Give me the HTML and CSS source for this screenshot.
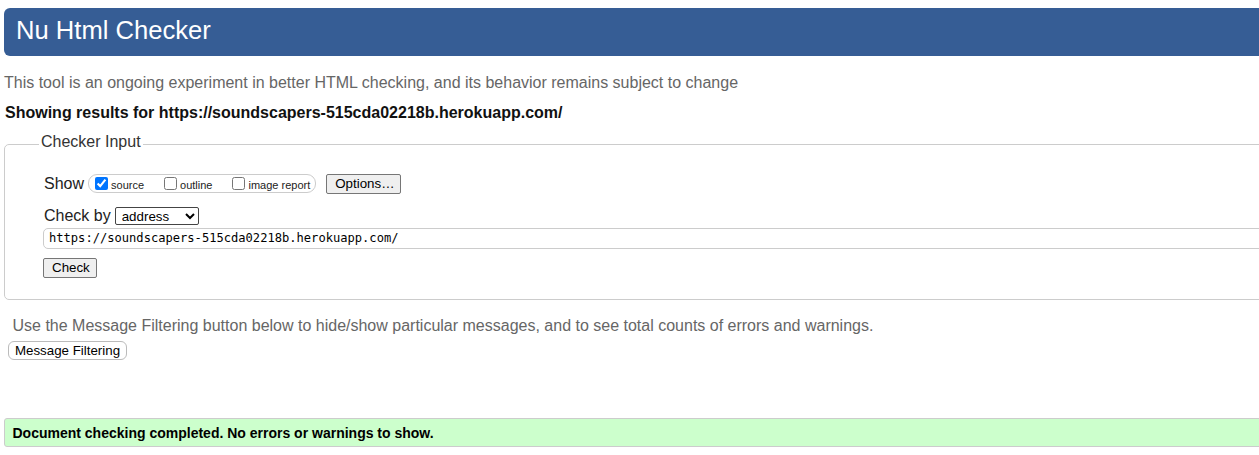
FILE: index.html
```html
<!DOCTYPE html>
<html lang="en">
<head>
<meta charset="utf-8">
<title>Nu Html Checker</title>
<link rel="stylesheet" href="styles.css">
</head>
<body>
<h1 class="title">Nu Html Checker</h1>
<p class="tagline">This tool is an ongoing experiment in better HTML checking, and its behavior remains subject to change</p>
<p class="results-for">Showing results for https://soundscapers-515cda02218b.herokuapp.com/</p>
<fieldset class="checker">
  <legend class="checker-legend">Checker Input</legend>
  <div class="row show-row">
    <span class="row-label">Show</span>
    <span class="show-group">
      <label class="opt"><input type="checkbox" checked><span>source</span></label>
      <label class="opt"><input type="checkbox"><span>outline</span></label>
      <label class="opt last"><input type="checkbox"><span>image report</span></label>
    </span>
    <button class="btn options-btn" type="button">Options…</button>
  </div>
  <div class="row checkby-row">
    <span class="row-label">Check by</span>
    <select class="checkby-select"><option>address</option></select>
  </div>
  <div class="url-row">
    <input class="url-input" type="text" value="https://soundscapers-515cda02218b.herokuapp.com/">
  </div>
  <div class="submit-row">
    <button class="btn check-btn" type="button">Check</button>
  </div>
</fieldset>
<p class="filter-note">Use the Message Filtering button below to hide/show particular messages, and to see total counts of errors and warnings.</p>
<button class="filter-btn" type="button">Message Filtering</button>
<p class="success">Document checking completed. No errors or warnings to show.</p>
</body>
</html>
```
FILE: styles.css
```css
html {
  overflow: hidden;
  background: #fff;
}
body {
  margin: 8px 0 0 4px;
  width: 1300px;
  font-family: "Liberation Sans", Arial, sans-serif;
  font-size: 16px;
  color: #222;
}
.title {
  margin: 0;
  height: 48px;
  box-sizing: border-box;
  padding: 0 0 4px 12px;
  line-height: 44px;
  font-size: 25.6px;
  font-weight: normal;
  color: #fff;
  background: #365d95;
  border-radius: 6px 0 0 6px;
}
.tagline {
  margin: 17.5px 0 0 0;
  line-height: 18px;
  color: #666;
}
.results-for {
  margin: 12.5px 0 0 1px;
  line-height: 18px;
  font-weight: bold;
  color: #111;
}
.checker {
  margin: 11px 0 0 0;
  padding: 18.5px 0 21px 39px;
  border: 1px solid #ccc;
  border-radius: 5px 0 0 5px;
  min-width: 0;
}
.checker-legend {
  margin-left: -5px;
  padding: 0 2px 4px;
  line-height: 18px;
  color: #333;
}
.row {
  display: flex;
  align-items: center;
  height: 20px;
}
.row-label {
  line-height: 18px;
  margin-right: 4px;
}
.show-group {
  display: flex;
  align-items: center;
  height: 19px;
  box-sizing: border-box;
  border: 1px solid #ccc;
  border-radius: 9px;
  padding: 0 5px 0 2px;
  font-size: 11px;
}
.opt {
  display: flex;
  align-items: center;
  margin-right: 16px;
}
.opt.last {
  margin-right: 0;
}
.opt input {
  margin: 0 3px 0 4px;
  width: 13px;
  height: 13px;
}
.opt span {
  position: relative;
  top: 1px;
}
.btn {
  font-family: "Liberation Sans", Arial, sans-serif;
  font-size: 13.33px;
  height: 20px;
  padding: 0 8px;
  border: 1px solid #767676;
  border-radius: 2px;
  background: #efefef;
  color: #000;
}
.options-btn {
  margin-left: 10px;
  width: 75px;
}
.checkby-row {
  margin-top: 12px;
}
.checkby-select {
  width: 84px;
  height: 18px;
  font-family: "Liberation Sans", Arial, sans-serif;
  font-size: 13.33px;
  border: 1px solid #444;
  border-radius: 2px;
  background: #fff;
  color: #000;
  padding: 0 0 0 2px;
}
.url-row {
  margin-top: 2px;
}
.url-input {
  display: block;
  box-sizing: border-box;
  width: 1300px;
  height: 21px;
  margin-left: -1px;
  padding: 0 5px;
  border: 1px solid #ccc;
  border-radius: 5px;
  font-family: "DejaVu Sans Mono", "Liberation Mono", monospace;
  font-size: 12.1px;
  color: #000;
}
.submit-row {
  margin-top: 9px;
  height: 20px;
}
.check-btn {
  margin-left: -1px;
  width: 54px;
}
.filter-note {
  margin: 17px 0 0 8.5px;
  line-height: 18px;
  color: #666;
}
.filter-btn {
  display: block;
  margin: 6.5px 0 0 4px;
  height: 19px;
  width: 119px;
  padding: 0;
  font-family: "Liberation Sans", Arial, sans-serif;
  font-size: 13.33px;
  color: #000;
  background: #fff;
  border: 1px solid #bbb;
  border-radius: 6px;
}
.success {
  margin: 58px 0 0 0;
  height: 29px;
  box-sizing: border-box;
  padding: 2px 0 0 7.5px;
  line-height: 25px;
  font-size: 14px;
  font-weight: bold;
  color: #000;
  background: #ccffcc;
  border: 1px solid #ccc;
  border-radius: 3px 0 0 3px;
}
```
